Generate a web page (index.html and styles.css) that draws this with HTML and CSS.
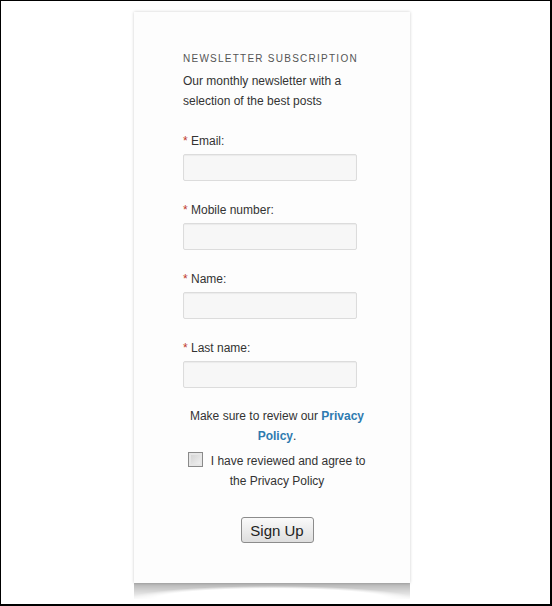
FILE: index.html
```html
<!DOCTYPE html>
<html lang="en">
<head>
<meta charset="utf-8">
<title>Newsletter Subscription</title>
<link rel="stylesheet" href="styles.css">
</head>
<body>
<div class="frame">
  <form class="card">
    <h2 class="title">Newsletter Subscription</h2>
    <p class="desc">Our monthly newsletter with a selection of the best posts</p>
    <div class="field">
      <label class="label"><span class="req">*</span> Email:</label>
      <input class="input" type="text">
    </div>
    <div class="field">
      <label class="label"><span class="req">*</span> Mobile number:</label>
      <input class="input" type="text">
    </div>
    <div class="field">
      <label class="label"><span class="req">*</span> Name:</label>
      <input class="input" type="text">
    </div>
    <div class="field">
      <label class="label"><span class="req">*</span> Last name:</label>
      <input class="input" type="text">
    </div>
    <p class="note">Make sure to review our <a class="link" href="#">Privacy Policy</a>.</p>
    <p class="agree"><input class="check" type="checkbox"> I have reviewed and agree to the Privacy Policy</p>
    <div class="actions"><button class="btn" type="button">Sign Up</button></div>
  </form>
</div>
</body>
</html>
```
FILE: styles.css
```css
html, body {
  margin: 0;
  padding: 0;
  background: #fff;
}
.frame {
  width: 552px;
  height: 606px;
  box-sizing: border-box;
  border-style: solid;
  border-color: #000;
  border-width: 1px 2px 2px 1px;
  padding: 11px 0 0 133px;
  font-family: "Liberation Sans", Arial, sans-serif;
  color: #333;
}
.card {
  position: relative;
  width: 276px;
  height: 571px;
  box-sizing: border-box;
  padding: 40px 39px 0 49px;
  background: #fdfdfd;
  box-shadow: 0 0 3px rgba(0, 0, 0, 0.2);
}
.card::after {
  content: "";
  position: absolute;
  left: 0;
  right: 0;
  top: 100%;
  height: 16px;
  background:
    radial-gradient(ellipse 144px 13px at 50% 100%, #fff 0, #fff 80%, rgba(255,255,255,0) 100%),
    linear-gradient(to bottom, rgba(0,0,0,0.3), rgba(0,0,0,0.02));
}
.title {
  margin: 0;
  font-size: 10px;
  line-height: 14px;
  font-weight: normal;
  text-transform: uppercase;
  letter-spacing: 1.25px;
  color: #555;
}
.desc {
  margin: 5px 0 0;
  font-size: 12px;
  line-height: 20px;
  color: #333;
}
.field {
  display: flex;
  flex-direction: column;
  align-items: flex-start;
  margin-top: 20px;
}
.desc + .field {
  margin-top: 21px;
}
.label {
  font-size: 12px;
  line-height: 18px;
  color: #333;
  margin-bottom: 4px;
}
.req {
  color: #c0392b;
}
.input {
  width: 174px;
  height: 27px;
  box-sizing: border-box;
  margin: 0;
  border: 1px solid #dcdcdc;
  border-radius: 2px;
  background: #f7f7f7;
  box-shadow: inset 0 1px 1px rgba(0, 0, 0, 0.05);
}
.note {
  margin: 18px 0 0;
  text-align: center;
  font-size: 12px;
  line-height: 20px;
  color: #333;
}
.link {
  color: #2e7bb0;
  font-weight: bold;
  text-decoration: none;
}
.agree {
  margin: 5px 0 0;
  text-align: center;
  font-size: 12px;
  line-height: 20px;
  color: #333;
}
.check {
  appearance: none;
  -webkit-appearance: none;
  display: inline-block;
  width: 15px;
  height: 15px;
  margin: 0 4px 0 0;
  vertical-align: -2px;
  box-sizing: border-box;
  border: 1px solid #8a8a8a;
  background: linear-gradient(135deg, #cfcfcf, #f4f4f4);
  box-shadow: inset 0 0 0 2px #e6e6e6;
}
.actions {
  display: flex;
  justify-content: center;
  margin-top: 26px;
}
.btn {
  width: 73px;
  height: 26px;
  margin: 0;
  padding: 0;
  border: 1px solid #8c8c8c;
  border-radius: 3px;
  background: linear-gradient(to bottom, #fafafa, #dedede);
  font-family: "Liberation Sans", Arial, sans-serif;
  font-size: 15px;
  color: #222;
}
```
